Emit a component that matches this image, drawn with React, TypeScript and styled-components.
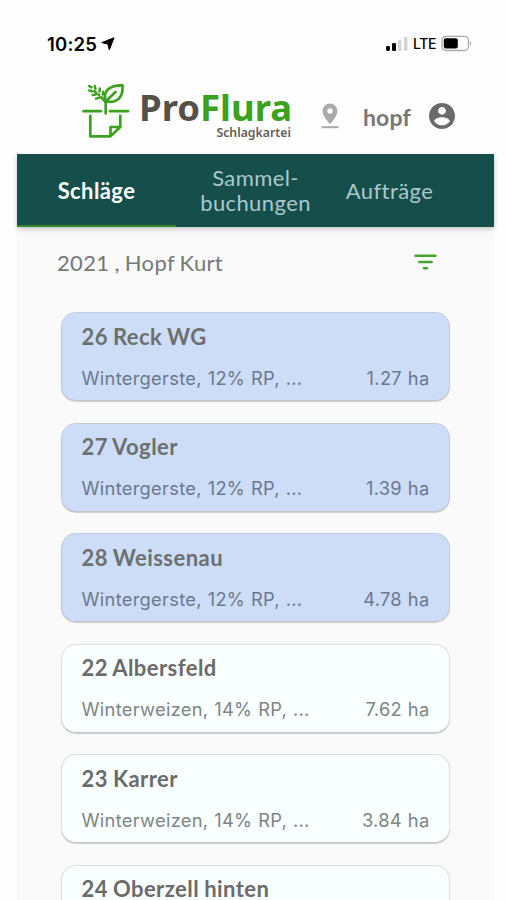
import React from "react";
import styled, { createGlobalStyle } from "styled-components";

const GlobalStyle = createGlobalStyle`
  * { box-sizing: border-box; }
  html, body { margin: 0; background: #fff; overflow: hidden; }
`;

const Screen = styled.div`
  width: 507px;
  height: 900px;
  padding: 0 13px 0 17px;
  display: flex;
  flex-direction: column;
  overflow: hidden;
  background: #fefefe;
  font-family: Lato, sans-serif;
  color: #6e6e6e;
`;

const StatusBar = styled.div`
  height: 76px;
  flex: none;
  display: flex;
  align-items: flex-start;
  padding: 32px 22px 0 30px;
  font-family: Inter, sans-serif;
  color: #000;
`;

const Clock = styled.span`
  font-size: 18.5px;
  line-height: 24px;
  font-weight: 600;
  letter-spacing: 0.2px;
  width: 52px;
  white-space: nowrap;
`;

const Network = styled.span`
  font-size: 14px;
  line-height: 24px;
  font-weight: 500;
  width: 28px;
  letter-spacing: -0.4px;
`;

const LocationArrow = styled.svg`
  margin: 5px 0 0 2px;
`;

const Signal = styled.svg`
  margin: 4px 5px 0 auto;
`;

const Battery = styled.svg`
  margin-top: 3px;
`;

const Header = styled.header`
  height: 78px;
  flex: none;
  display: flex;
  align-items: flex-start;
  padding: 7px 39px 0 64px;
`;

const Brand = styled.div`
  width: 154px;
  margin-left: 8px;
  font-family: "Noto Sans", sans-serif;
`;

const BrandName = styled.div`
  font-size: 36.5px;
  line-height: 40px;
  height: 40px;
  margin-top: 4px;
  font-weight: 700;
  letter-spacing: 0;
  color: #55514a;
  white-space: nowrap;
`;

const Accent = styled.span`
  color: #3ca21e;
`;

const BrandSub = styled.div`
  font-size: 12.3px;
  line-height: 14px;
  margin-top: -1px;
  font-weight: 600;
  text-align: right;
  padding-right: 2px;
  color: #625e5b;
`;

const Pin = styled.svg`
  margin: 20px 0 0 28px;
`;

const User = styled.span`
  margin: 20px 0 0 24px;
  width: 48px;
  font-size: 23px;
  line-height: 28px;
  font-weight: 700;
  letter-spacing: 0.15px;
  color: #777;
`;

const Avatar = styled.svg`
  margin: 20px 0 0 auto;
`;

const Tabs = styled.nav`
  height: 73px;
  flex: none;
  display: flex;
  background: #154e4b;
  box-shadow: 0 2px 5px rgba(0, 0, 0, 0.22);
  z-index: 1;
`;

const Tab = styled.div<{ $active?: boolean; $shift?: number }>`
  width: 159px;
  display: flex;
  align-items: center;
  justify-content: center;
  text-align: center;
  white-space: pre-line;
  font-size: 22px;
  line-height: 25px;
  letter-spacing: 0.4px;
  padding-top: 1px;
  padding-right: ${(p) => p.$shift ?? 0}px;
  font-weight: ${(p) => (p.$active ? 700 : 400)};
  color: ${(p) => (p.$active ? "#fbfdfd" : "#aac8cb")};
  border-bottom: 2px solid ${(p) => (p.$active ? "#32872b" : "transparent")};
`;

const Content = styled.main`
  flex: 1;
  min-height: 0;
  overflow: hidden;
  background: #fafafa;
`;

const FilterRow = styled.div`
  height: 85.4px;
  display: flex;
  justify-content: space-between;
  align-items: flex-start;
  padding: 22px 57px 0 40px;
  font-size: 22px;
  line-height: 28px;
  letter-spacing: 0.35px;
  word-spacing: -1px;
  color: #777;
`;

const FilterIcon = styled.svg`
  margin-top: 5px;
`;

const List = styled.div`
  display: flex;
  flex-direction: column;
  gap: 21.5px;
  padding: 0 44px;
`;

const Card = styled.article<{ $blue: boolean }>`
  height: 89px;
  flex: none;
  border-radius: 15px;
  border: 1px solid ${(p) => (p.$blue ? "#c6cbd9" : "#dedfdf")};
  border-bottom-color: #c4c6cb;
  background: ${(p) => (p.$blue ? "#cdddf8" : "#faffff")};
  box-shadow: 0 1px 1px rgba(0, 0, 0, 0.18);
  padding: 9.5px 19.5px 0;
`;

const Title = styled.div<{ $blue: boolean }>`
  font-size: 22px;
  line-height: 28px;
  font-weight: 700;
  letter-spacing: 0.45px;
  word-spacing: -0.8px;
  color: ${(p) => (p.$blue ? "#6c706f" : "#6b6b6b")};
`;

const Detail = styled.div<{ $blue: boolean }>`
  display: flex;
  justify-content: space-between;
  margin-top: 15px;
  font-family: Inter, sans-serif;
  font-size: 18.3px;
  line-height: 24px;
  letter-spacing: 0.3px;
  word-spacing: 0.4px;
  color: ${(p) => (p.$blue ? "#6c788d" : "#808484")};
`;

type Field = { name: string; crop?: string; area?: string; blue: boolean };

const fields: Field[] = [
  { name: "26 Reck WG", crop: "Wintergerste, 12% RP, ...", area: "1.27 ha", blue: true },
  { name: "27 Vogler", crop: "Wintergerste, 12% RP, ...", area: "1.39 ha", blue: true },
  { name: "28 Weissenau", crop: "Wintergerste, 12% RP, ...", area: "4.78 ha", blue: true },
  { name: "22 Albersfeld", crop: "Winterweizen, 14% RP, ...", area: "7.62 ha", blue: false },
  { name: "23 Karrer", crop: "Winterweizen, 14% RP, ...", area: "3.84 ha", blue: false },
  { name: "24 Oberzell hinten", blue: false },
];

function Logo() {
  return (
    <svg width="50" height="57" viewBox="0 0 50 57" fill="none" stroke="#3ca21e" strokeWidth="2.7" strokeLinecap="round" strokeLinejoin="round">
      <path d="M2.5 28.2H20M29 28.2H47" />
      <path d="M24.7 30.5V18.5C21.5 9 27.5 2 41.5 2.4C42.5 13.5 37 20.5 24.7 18.5L34.5 9" />
      <path d="M9.3 32.8V53.3H29.5L39.3 44V32.8M29.5 53.3V44H39.3" />
      <path d="M24.3 18.5L20.2 14.2" />
      <path d="M8.2 3L10.6 4.4M7.9 7.4L11 8.2M13.8 3L14.4 6M18.9 5.6L18.5 8.6M11.8 12L14.8 11.5M15 15.6L18.2 14.6M13.2 8.2L15.2 9.6M22.2 8.8L21.8 11.4M17.2 11.2L18.2 12" strokeWidth="2.5" />
    </svg>
  );
}

export default function App() {
  return (
    <>
      <GlobalStyle />
      <Screen>
        <StatusBar>
          <Clock>10:25</Clock>
          <LocationArrow width="14" height="14" viewBox="0 0 14 14">
            <path d="M13 .8L8.3 13L6.9 7.1L.8 5.6Z" fill="#000" stroke="#000" strokeLinejoin="round" />
          </LocationArrow>
          <Signal width="22" height="16" viewBox="0 0 22 16">
            <rect x="0" y="10" width="4" height="5" rx="1.4" fill="#000" />
            <rect x="6" y="7" width="4" height="8" rx="1.2" fill="#000" />
            <rect x="12" y="4" width="3.5" height="11" rx="1" fill="#d5d5d5" />
            <rect x="18" y="1" width="3.5" height="14" rx="1" fill="#d5d5d5" />
          </Signal>
          <Network>LTE</Network>
          <Battery width="31" height="17" viewBox="0 0 31 17">
            <rect x="1" y="1.3" width="26.5" height="14.2" rx="4" fill="none" stroke="#aaa" strokeWidth="1.3" />
            <rect x="2.8" y="3.3" width="14" height="10.3" rx="2" fill="#000" />
            <path d="M29 6V11Q31 8.5 29 6" fill="#999" />
          </Battery>
        </StatusBar>
        <Header>
          <Logo />
          <Brand>
            <BrandName>Pro<Accent>Flura</Accent></BrandName>
            <BrandSub>Schlagkartei</BrandSub>
          </Brand>
          <Pin width="18" height="26" viewBox="0 0 18 26" fill="#aaa">
            <path fillRule="evenodd" d="M9 .5A7.5 7.5 0 0 0 1.5 8C1.5 13.5 9 21 9 21S16.5 13.5 16.5 8A7.5 7.5 0 0 0 9 .5M9 5.3A2.7 2.7 0 1 1 9 10.7A2.7 2.7 0 0 1 9 5.3" />
            <path d="M.5 23.2H17.5V25.2H.5Z" />
          </Pin>
          <User>hopf</User>
          <Avatar width="26" height="26" viewBox="2 2 20 20" fill="#6b6b6b">
            <path d="M12 2C6.48 2 2 6.48 2 12s4.48 10 10 10 10-4.48 10-10S17.52 2 12 2m0 3c1.66 0 3 1.34 3 3s-1.34 3-3 3-3-1.34-3-3 1.34-3 3-3m0 14.2c-2.5 0-4.71-1.28-6-3.22.03-1.99 4-3.08 6-3.08s5.97 1.09 6 3.08c-1.29 1.94-3.5 3.22-6 3.22" />
          </Avatar>
        </Header>
        <Tabs>
          <Tab $active>Schläge</Tab>
          <Tab>{"Sammel-\nbuchungen"}</Tab>
          <Tab $shift={50}>Aufträge</Tab>
        </Tabs>
        <Content>
          <FilterRow>
            <span>2021 , Hopf Kurt</span>
            <FilterIcon width="23" height="16" viewBox="0 0 23 16" stroke="#48a32d" strokeWidth="2.4" strokeLinecap="round">
              <path d="M1.5 1.8H21.5M5.3 8H17.7M9.9 14.2H13.1" />
            </FilterIcon>
          </FilterRow>
          <List>
            {fields.map((f) => (
              <Card key={f.name} $blue={f.blue}>
                <Title $blue={f.blue}>{f.name}</Title>
                {f.crop && (
                  <Detail $blue={f.blue}>
                    <span>{f.crop}</span>
                    <span>{f.area}</span>
                  </Detail>
                )}
              </Card>
            ))}
          </List>
        </Content>
      </Screen>
    </>
  );
}
